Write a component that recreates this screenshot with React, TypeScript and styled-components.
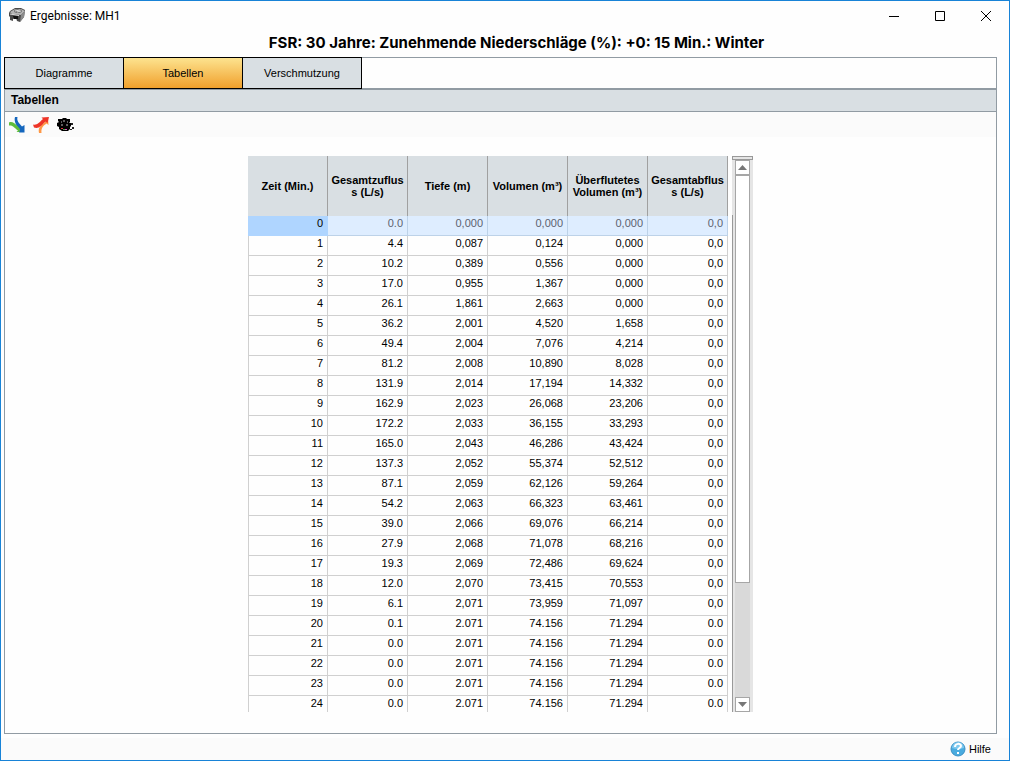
import React from "react";
import styled, { createGlobalStyle, css } from "styled-components";

const Global = createGlobalStyle`
  *, *::before, *::after { box-sizing: border-box; }
  body { margin: 0; background: #fefefe; font-family: "Liberation Sans", Arial, sans-serif; font-size: 11px; color: #000; }
  button { font: inherit; color: inherit; margin: 0; padding: 0; border: 0; background: none; }
`;

const Window = styled.div`
  display: flex;
  flex-direction: column;
  min-height: 100vh;
  border: 1px solid #1883d7;
`;

const TitleBar = styled.header`
  display: flex;
  align-items: center;
  height: 30px;
  padding-left: 8px;
`;

const WindowTitle = styled.h1`
  flex: 1;
  margin: 0 0 0 4px;
  font: 400 12px/16px Roboto, "Noto Sans", sans-serif;
`;

const WindowButton = styled.button`
  display: grid;
  place-items: center;
  width: 46px;
  height: 28px;
`;

const Heading = styled.h2`
  margin: 0;
  padding: 0 0 0 23px;
  height: 26px;
  font-family: Inter, "Liberation Sans", sans-serif;
  font-size: 15px;
  line-height: 24px;
  font-weight: 700;
  text-align: center;
`;

const Panel = styled.main`
  flex: 1;
  display: flex;
  flex-direction: column;
  margin: 0 12px 0 3px;
  border: 1px solid #919ba3;
`;

const TabBar = styled.div`
  position: relative;
  z-index: 1;
  display: flex;
  height: 32px;
  margin: -1px 0 -1px -1px;
`;

const Tab = styled.button<{ $active?: boolean }>`
  width: 120px;
  border: 1px solid #000;
  background: ${(p) => (p.$active ? "linear-gradient(#fde38f, #f0a02c)" : "#d9dfe3")};
  & + & { margin-left: -1px; }
`;

const SectionTitle = styled.h3`
  margin: 0;
  height: 24px;
  padding-left: 6px;
  border-top: 2px solid #919ba3;
  border-bottom: 1px solid #919ba3;
  background: #d9dfe3;
  font-size: 12px;
  line-height: 20px;
`;

const Toolbar = styled.div`
  display: flex;
  gap: 8px;
  height: 25px;
  padding: 5px 4px 4px;
  background: #fbfbfb;
`;

const ToolButton = styled.button`
  width: 16px;
  height: 16px;
  svg { display: block; }
`;

const GridArea = styled.section`
  display: flex;
  justify-content: center;
  gap: 4px;
  padding: 19px 0 21px;
`;

const TableView = styled.div`
  width: 480px;
  height: 556px;
  overflow: hidden;
`;

const DataTable = styled.table`
  width: 100%;
  table-layout: fixed;
  border-collapse: separate;
  border-spacing: 0;
`;

const HeadCell = styled.th`
  height: 60px;
  padding: 0;
  border-right: 1px solid #a0a0a0;
  background: #d9dfe3;
  line-height: 12px;
  white-space: nowrap;
`;

const Cell = styled.td<{ $selected?: boolean; $current?: boolean }>`
  height: 20px;
  padding: 0 4px 4px 0;
  border-right: 1px solid #d0d0d0;
  border-bottom: 1px solid #d0d0d0;
  line-height: 15px;
  text-align: right;
  &:first-child { border-left: 1px solid #d0d0d0; }
  ${(p) =>
    p.$selected &&
    css`
      background: #deedff;
      color: #5c6270;
      border-color: #bdd2e8;
    `}
  ${(p) =>
    p.$current &&
    css`
      background: #afd5ff;
      color: #000;
      &:first-child { border-color: #afd5ff; }
    `}
`;

const ScrollFrame = styled.div`
  display: flex;
  flex-direction: column;
  width: 21px;
  height: 556px;
`;

const ScrollCap = styled.div`
  height: 4px;
  border: 1px solid #999;
  background: #e5e5e5;
`;

const ScrollTrack = styled.div`
  flex: 1;
  display: flex;
  flex-direction: column;
  padding: 0 3px;
  background:
    linear-gradient(#999, #999) 0 55px / 1px 100% no-repeat,
    linear-gradient(#d9d9d9, #d9d9d9) content-box,
    #e5e5e5;
`;

const ScrollButton = styled.button`
  display: grid;
  place-items: center;
  width: 15px;
  height: 15px;
  border: 1px solid #a6a6a6;
  background: #fff;
`;

const ScrollThumb = styled.div`
  height: 408px;
  border: 1px solid #a6a6a6;
  background: #fff;
`;

const ScrollGap = styled.div`
  flex: 1;
`;

const Footer = styled.footer`
  display: flex;
  justify-content: flex-end;
  margin-top: 4px;
  height: 22px;
  padding-right: 18px;
  background: #fbfbfb;
`;

const HelpButton = styled.button`
  display: flex;
  align-items: center;
  gap: 3px;
`;

const TitleIcon = () => (
  <svg width="17" height="17" viewBox="0 0 17 17" aria-hidden="true">
    <path d="M0 5 1 3 6 0h6l4 2-1 7-4 5-3-1-1-3-3 1v2l-3-1V9L0 8z" fill="#4a4a4a" />
    <path d="M1 4 6 1l6 0 4 2-4 4-9-1z" fill="#b5b5b5" />
    <ellipse cx="9" cy="3" rx="4" ry="2" fill="#777" />
    <path d="M6 3l5-1M8 4l4-1" stroke="#ddd" />
    <path d="M12 7l4-4-1 6-4 5z" fill="#8b8b8b" />
    <path d="M4 8h5v3H5z" fill="#111" />
    <path d="M1 6l9 1.500" stroke="#e0e0e0" />
  </svg>
);

const InflowIcon = () => (
  <svg width="16" height="16" viewBox="0 0 16 16" aria-hidden="true">
    <path d="M0 5.500C4 4 6 7 11 12l1.500-1.500V15H7.500L9 13.500C5.500 11 4 8 0 8.500z" fill="#5fbd3c" />
    <path d="M6 0h2.500C7.500 4 10 6 13 9.500L15.500 8v7.500H10l1-2C8 9 4.500 5 6 0z" fill="#1466bd" />
    <path d="M2 6.500c4 0 6 4 8.500 6.500" fill="none" stroke="#5fbd3c" strokeWidth="2" />
  </svg>
);

const OutflowIcon = () => (
  <svg width="16" height="16" viewBox="0 0 16 16" aria-hidden="true">
    <path d="M6 16c-1-5 1-7 5-10l4-5 .5 7-2-1.500C10 9 8 11 8.500 16z" fill="#ff9845" />
    <path d="M0 7.500c4 1 6-2 10-5.500L8.500.5 16 0l-1.500 6-2-1.500C8 9 6 12 1 10.500z" fill="#ee3528" />
  </svg>
);

const PollutionIcon = () => (
  <svg width="17" height="16" viewBox="0 0 17 16" aria-hidden="true">
    <path d="M1 2h4l1-1h3l1 1h3v3l-1 1h2v3l-1 1v2l-2 2H5l-3-2v-2L0 9V6l2-1-1-1z" fill="#000" />
    <path d="M4 5h1M6 4h2M10 5h1M4 8h2M9 8h2" stroke="#bbb" />
    <path d="M14 6h2v2h-2zM15 10h2v2h-2zM13 12h2v1h-2z" fill="#222" />
    <path d="M4 11h2v1H4z" fill="#d33" />
    <path d="M6 12h2v1H6z" fill="#4a4" />
    <path d="M8 12h2v1H8z" fill="#d5c" />
  </svg>
);

const HelpIcon = () => (
  <svg width="16" height="16" viewBox="0 0 16 16" aria-hidden="true">
    <circle cx="8" cy="8" r="7" fill="#49abdf" stroke="#3b8fc4" />
    <path d="M2 7a6 6 0 0 1 12 0q-6 2-12 0z" fill="#7fc9ef" />
    <path d="M5 6c0-4 6-4 6-1 0 2-3 2-3 4" fill="none" stroke="#fff" strokeWidth="2" />
    <path d="M7 11h2v2H7z" fill="#fff" />
  </svg>
);

const columns = [
  ["Zeit (Min.)"],
  ["Gesamtzuflus", "s (L/s)"],
  ["Tiefe (m)"],
  ["Volumen (m³)"],
  ["Überflutetes", "Volumen (m³)"],
  ["Gesamtabflus", "s (L/s)"],
];

const rows = `0 0.0 0,000 0,000 0,000 0,0
1 4.4 0,087 0,124 0,000 0,0
2 10.2 0,389 0,556 0,000 0,0
3 17.0 0,955 1,367 0,000 0,0
4 26.1 1,861 2,663 0,000 0,0
5 36.2 2,001 4,520 1,658 0,0
6 49.4 2,004 7,076 4,214 0,0
7 81.2 2,008 10,890 8,028 0,0
8 131.9 2,014 17,194 14,332 0,0
9 162.9 2,023 26,068 23,206 0,0
10 172.2 2,033 36,155 33,293 0,0
11 165.0 2,043 46,286 43,424 0,0
12 137.3 2,052 55,374 52,512 0,0
13 87.1 2,059 62,126 59,264 0,0
14 54.2 2,063 66,323 63,461 0,0
15 39.0 2,066 69,076 66,214 0,0
16 27.9 2,068 71,078 68,216 0,0
17 19.3 2,069 72,486 69,624 0,0
18 12.0 2,070 73,415 70,553 0,0
19 6.1 2,071 73,959 71,097 0,0
20 0.1 2.071 74.156 71.294 0.0
21 0.0 2.071 74.156 71.294 0.0
22 0.0 2.071 74.156 71.294 0.0
23 0.0 2.071 74.156 71.294 0.0
24 0.0 2.071 74.156 71.294 0.0`
  .split("\n")
  .map((line) => line.split(" "));

export default function App() {
  return (
    <Window>
      <Global />
      <TitleBar>
        <TitleIcon />
        <WindowTitle>Ergebnisse: MH1</WindowTitle>
        <WindowButton aria-label="Minimieren">
          <svg width="10" height="10"><path d="M0 5.5h10" stroke="#000" /></svg>
        </WindowButton>
        <WindowButton aria-label="Maximieren">
          <svg width="10" height="10"><path d="M.5.5h9v9h-9z" fill="none" stroke="#000" /></svg>
        </WindowButton>
        <WindowButton aria-label="Schließen">
          <svg width="10" height="10"><path d="M0 0l10 10M10 0L0 10" stroke="#000" /></svg>
        </WindowButton>
      </TitleBar>
      <Heading>FSR: 30 Jahre: Zunehmende Niederschläge (%): +0: 15 Min.: Winter</Heading>
      <Panel>
        <TabBar role="tablist">
          <Tab role="tab" aria-selected={false}>Diagramme</Tab>
          <Tab role="tab" aria-selected $active>Tabellen</Tab>
          <Tab role="tab" aria-selected={false}>Verschmutzung</Tab>
        </TabBar>
        <SectionTitle>Tabellen</SectionTitle>
        <Toolbar>
          <ToolButton aria-label="Zufluss"><InflowIcon /></ToolButton>
          <ToolButton aria-label="Abfluss"><OutflowIcon /></ToolButton>
          <ToolButton aria-label="Verschmutzung"><PollutionIcon /></ToolButton>
        </Toolbar>
        <GridArea>
          <TableView>
            <DataTable>
              <thead>
                <tr>
                  {columns.map((lines) => (
                    <HeadCell key={lines[0]} scope="col">
                      {lines[0]}
                      {lines[1] && <><br />{lines[1]}</>}
                    </HeadCell>
                  ))}
                </tr>
              </thead>
              <tbody>
                {rows.map((row, r) => (
                  <tr key={row[0]}>
                    {row.map((value, c) => (
                      <Cell key={c} $selected={r === 0} $current={r === 0 && c === 0}>{value}</Cell>
                    ))}
                  </tr>
                ))}
              </tbody>
            </DataTable>
          </TableView>
          <ScrollFrame>
            <ScrollCap />
            <ScrollTrack>
              <ScrollButton aria-label="Nach oben">
                <svg width="9" height="5"><path d="M0 5 4.500 0 9 5z" fill="#777" /></svg>
              </ScrollButton>
              <ScrollThumb />
              <ScrollGap />
              <ScrollButton aria-label="Nach unten">
                <svg width="9" height="5"><path d="M0 0h9L4.500 5z" fill="#777" /></svg>
              </ScrollButton>
            </ScrollTrack>
          </ScrollFrame>
        </GridArea>
      </Panel>
      <Footer>
        <HelpButton><HelpIcon />Hilfe</HelpButton>
      </Footer>
    </Window>
  );
}
